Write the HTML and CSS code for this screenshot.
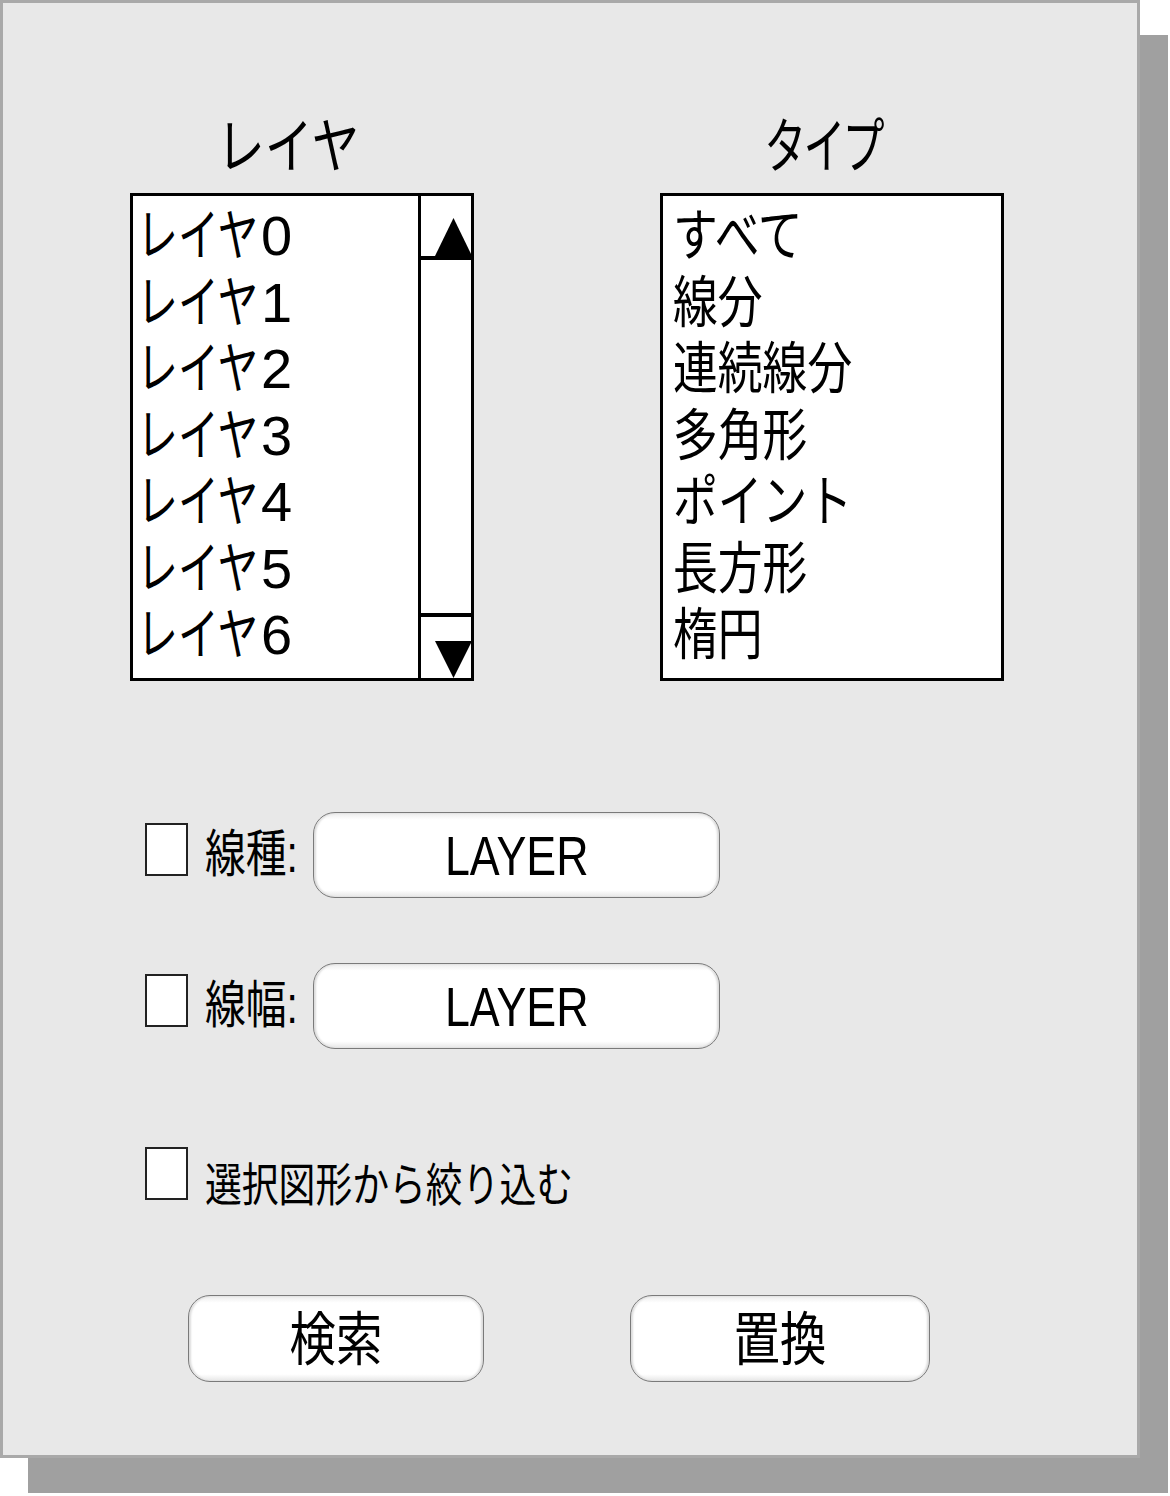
FILE: index.html
```html
<!DOCTYPE html>
<html>
	<head>
		<meta charset="UTF-8">
		<title>検索と置換</title>
		<link rel="stylesheet" href="styles.css">
	</head>
	<body>
		<div id="panel">
			<div id="lists">
				<div class="col">
					<h2 class="title"><span class="sx">レイヤ</span></h2>
					<div class="listbox">
						<ul class="items layers">
							<li><span class="sx">レイヤ</span><span class="num">0</span></li>
							<li><span class="sx">レイヤ</span><span class="num">1</span></li>
							<li><span class="sx">レイヤ</span><span class="num">2</span></li>
							<li><span class="sx">レイヤ</span><span class="num">3</span></li>
							<li><span class="sx">レイヤ</span><span class="num">4</span></li>
							<li><span class="sx">レイヤ</span><span class="num">5</span></li>
							<li><span class="sx">レイヤ</span><span class="num">6</span></li>
						</ul>
						<div class="scroll">
							<div class="arrow up">
								<svg width="37" height="38" viewBox="0 0 37 38"><polygon points="18.5,0 37,38 0,38" fill="#000"/></svg>
							</div>
							<div class="track"></div>
							<div class="arrow down">
								<svg width="37" height="37" viewBox="0 0 37 37"><polygon points="0,0 37,0 18.5,37" fill="#000"/></svg>
							</div>
						</div>
					</div>
				</div>
				<div class="col">
					<h2 class="title type-title"><span class="sx">タイプ</span></h2>
					<div class="listbox">
						<ul class="items types">
							<li><span class="sx">すべて</span></li>
							<li><span class="sx">線分</span></li>
							<li><span class="sx">連続線分</span></li>
							<li><span class="sx">多角形</span></li>
							<li><span class="sx">ポイント</span></li>
							<li><span class="sx">長方形</span></li>
							<li><span class="sx">楕円</span></li>
						</ul>
					</div>
				</div>
			</div>

			<div class="row first">
				<span class="check"></span>
				<span class="label"><span class="sx">線種:</span></span>
				<button class="btn wide"><span class="sx">LAYER</span></button>
			</div>
			<div class="row second">
				<span class="check"></span>
				<span class="label"><span class="sx">線幅:</span></span>
				<button class="btn wide"><span class="sx">LAYER</span></button>
			</div>
			<div class="row third">
				<span class="check"></span>
				<span class="label long"><span class="sx">選択図形から絞り込む</span></span>
			</div>

			<div id="actions">
				<button class="btn act search"><span class="sx">検索</span></button>
				<button class="btn act replace"><span class="sx">置換</span></button>
			</div>
		</div>
	</body>
</html>
```

FILE: styles.css
```css
body{
	margin: 0;
	padding-bottom: 40px;
	background: #fff;
	font-family: "Liberation Sans", "Noto Sans CJK JP", sans-serif;
	color: #000;
}
#panel{
	box-sizing: border-box;
	width: 1140px;
	height: 1458px;
	background: #e8e8e8;
	border: 3px solid #a9a9a9;
	box-shadow: 28px 35px 0 #a0a0a0;
	padding-left: 127px;
}
.sx{
	display: inline-block;
	transform: scaleX(.8);
	transform-origin: left center;
	white-space: nowrap;
}
#lists{
	display: flex;
	gap: 186px;
}
.col{
	width: 344px;
}
.title{
	margin: 112px 0 0;
	height: 78px;
	font-size: 60px;
	font-weight: normal;
	line-height: 66px;
	text-align: center;
	padding-right: 28px;
}
.title .sx{
	transform-origin: center;
}
.type-title{
	padding-right: 18px;
}
.type-title .sx{
	transform: scaleX(.7);
	letter-spacing: -4px;
}
.listbox{
	box-sizing: border-box;
	width: 344px;
	height: 488px;
	border: 3px solid #000;
	background: #fff;
	display: flex;
}
.items{
	flex: 1;
	list-style: none;
	margin: 0;
	padding: 7px 0 0 10px;
	font-size: 56px;
	line-height: 66.5px;
	overflow: hidden;
}
.layers{
	padding-left: 4px;
}
.layers .sx{
	transform: scaleX(.73);
	width: 123px;
}
.num{
	display: inline-block;
	margin-left: 1px;
}
.scroll{
	width: 50px;
	border-left: 3px solid #000;
	display: flex;
	flex-direction: column;
}
.arrow{
	display: flex;
	justify-content: flex-end;
	align-items: flex-end;
}
.arrow svg{
	display: block;
	margin-right: -1px;
}
.up{
	height: 60px;
	border-bottom: 4px solid #000;
}
.track{
	flex: 1;
}
.down{
	height: 61px;
	border-top: 4px solid #000;
}
.row{
	display: flex;
	align-items: center;
	margin-left: 15px;
}
.first{
	margin-top: 131px;
}
.second{
	margin-top: 65px;
}
.third{
	margin-top: 94px;
}
.check{
	box-sizing: border-box;
	width: 43px;
	height: 53px;
	border: 2px solid #222;
	background: #fff;
	flex: none;
	margin-bottom: 11px;
}
.label{
	width: 108px;
	margin-left: 17px;
	font-size: 51px;
	line-height: 60px;
}
.long{
	width: auto;
	font-size: 46px;
	padding-top: 12px;
}
.btn{
	box-sizing: border-box;
	font-family: inherit;
	color: #000;
	border: 1px solid #7a7a7a;
	border-radius: 22px;
	background: linear-gradient(#ececec, #fff 8%, #fff 92%, #e6e6e6);
	box-shadow: inset 2px 0 2px #ddd, inset -2px 0 2px #ddd;
	padding: 0;
	text-align: center;
}
.btn .sx{
	transform-origin: center;
}
.wide{
	width: 407px;
	height: 86px;
	font-size: 56px;
	line-height: 86px;
}
#actions{
	display: flex;
	margin-top: 80px;
	padding-left: 58px;
	gap: 146px;
}
.act{
	height: 87px;
	font-size: 58px;
	line-height: 87px;
}
.search{
	width: 296px;
}
.replace{
	width: 300px;
}
```
